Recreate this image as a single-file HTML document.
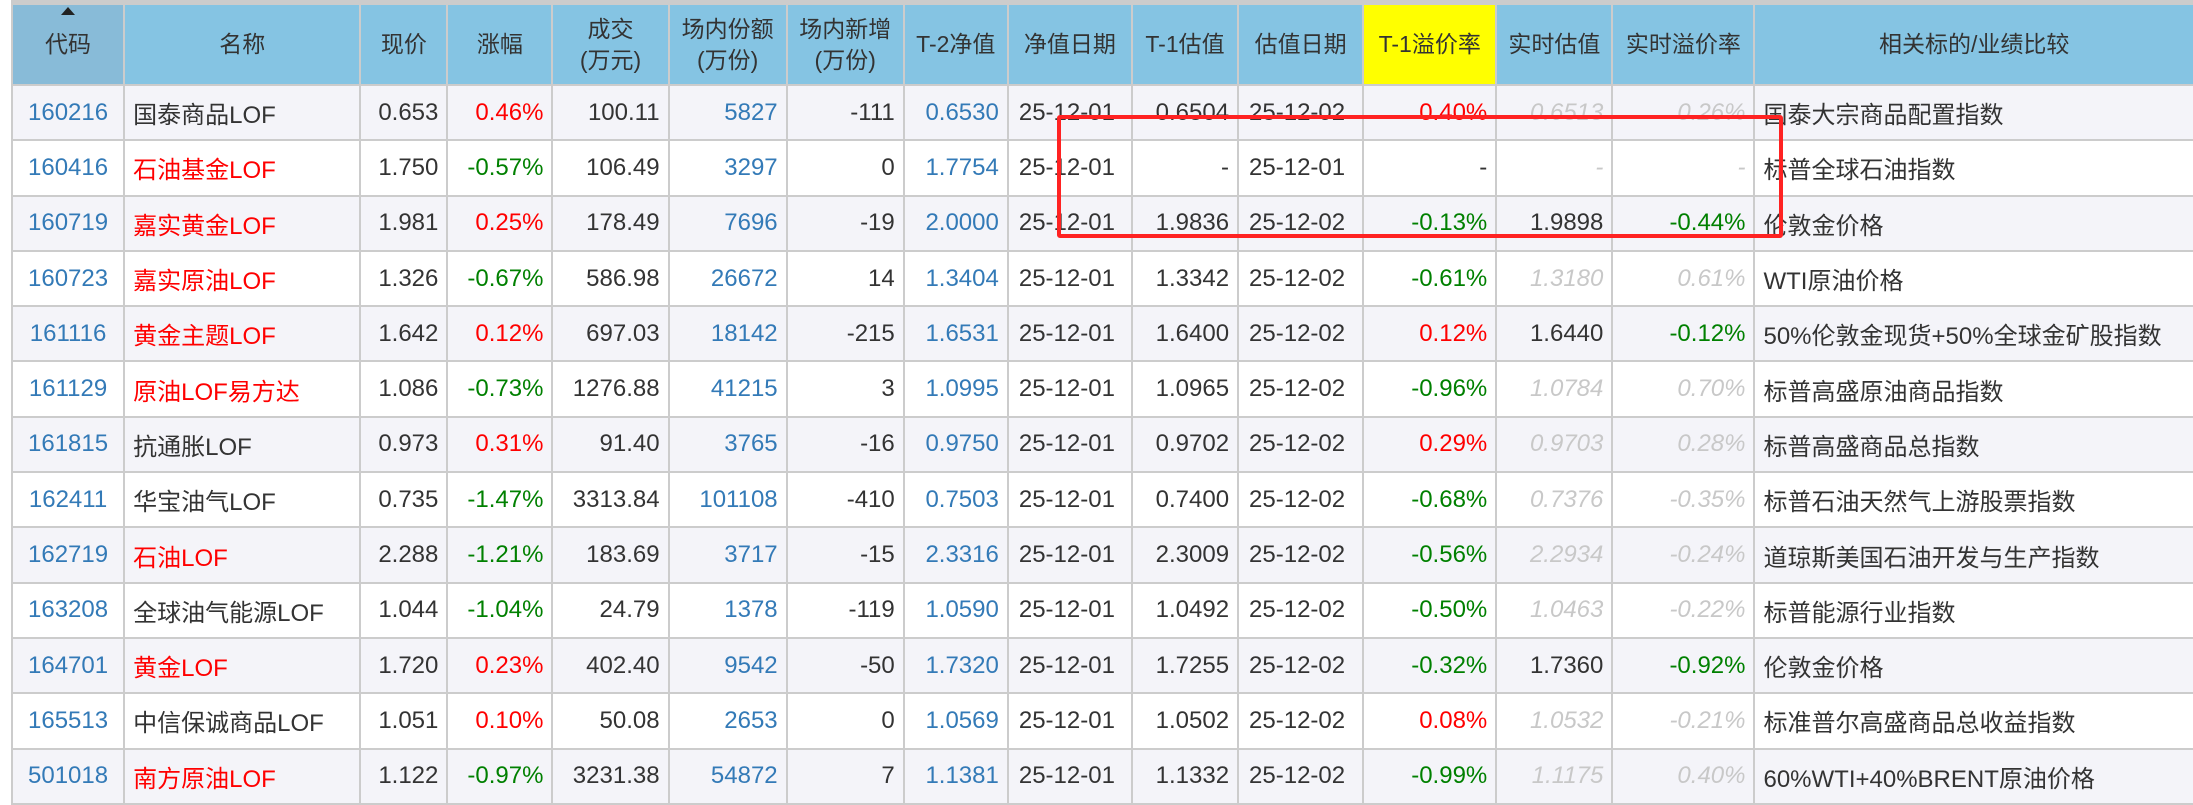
<!DOCTYPE html>
<html><head><meta charset="utf-8"><style>
html,body{margin:0;padding:0;background:#fff;width:2193px;height:805px;overflow:hidden}
body{font-family:"Liberation Sans","Noto Sans CJK SC",sans-serif;font-size:24px;color:#333}
.top{position:absolute;left:11px;top:0;width:2182px;height:4px;background:#ccc}
table{position:absolute;left:11px;top:3px;border-collapse:collapse;table-layout:fixed;width:2184px}
td,th{border:2px solid #ccc;padding:0 8px;white-space:nowrap;overflow:hidden}
th{background:#85c4e3;font-weight:normal;color:#333;height:79px;line-height:31px;text-align:center;position:relative;font-size:23px}
th.s{background:#88bbd8}
th.y{background:#ffff00}
tr.r td{height:53.3px}
tr.r:nth-child(even) td{background:#f4f4f9}
tr.r:nth-child(odd) td{background:#fff}
td{text-align:right}
td.c{text-align:center;color:#337ab7}
td.n{text-align:left}
td.d{text-align:left;padding-left:10px}
td.l{text-align:left}
.b{color:#337ab7}.rd{color:#f00}.g{color:#008000}.gr{color:#c8c8c8;font-style:italic}
.arr{position:absolute;left:50%;top:2px;margin-left:-7px;width:0;height:0;border-left:7px solid transparent;border-right:7px solid transparent;border-bottom:8px solid #222}
.box{position:absolute;left:1057px;top:115px;width:718px;height:115px;border:4px solid #f22;border-radius:3px}
</style></head><body>
<div class="top"></div>
<table>
<colgroup><col style="width:112px"><col style="width:236px"><col style="width:87px"><col style="width:105px"><col style="width:116px"><col style="width:118px"><col style="width:117px"><col style="width:104px"><col style="width:124px"><col style="width:106px"><col style="width:125px"><col style="width:133px"><col style="width:116px"><col style="width:142px"><col style="width:439px"></colgroup>
<tr><th class="s"><span class="arr"></span>代码</th><th>名称</th><th>现价</th><th>涨幅</th><th>成交<br>(万元)</th><th>场内份额<br>(万份)</th><th>场内新增<br>(万份)</th><th>T-2净值</th><th>净值日期</th><th>T-1估值</th><th>估值日期</th><th class="y">T-1溢价率</th><th>实时估值</th><th>实时溢价率</th><th>相关标的/业绩比较</th></tr>
<tr class="r"><td class="c">160216</td><td class="n">国泰商品LOF</td><td>0.653</td><td class="rd">0.46%</td><td>100.11</td><td class="b">5827</td><td>-111</td><td class="b">0.6530</td><td class="d">25-12-01</td><td>0.6504</td><td class="d">25-12-02</td><td class="rd">0.40%</td><td class="gr">0.6513</td><td class="gr">0.26%</td><td class="l">国泰大宗商品配置指数</td></tr>
<tr class="r"><td class="c">160416</td><td class="n rd">石油基金LOF</td><td>1.750</td><td class="g">-0.57%</td><td>106.49</td><td class="b">3297</td><td>0</td><td class="b">1.7754</td><td class="d">25-12-01</td><td>-</td><td class="d">25-12-01</td><td>-</td><td class="gr">-</td><td class="gr">-</td><td class="l">标普全球石油指数</td></tr>
<tr class="r"><td class="c">160719</td><td class="n rd">嘉实黄金LOF</td><td>1.981</td><td class="rd">0.25%</td><td>178.49</td><td class="b">7696</td><td>-19</td><td class="b">2.0000</td><td class="d">25-12-01</td><td>1.9836</td><td class="d">25-12-02</td><td class="g">-0.13%</td><td>1.9898</td><td class="g">-0.44%</td><td class="l">伦敦金价格</td></tr>
<tr class="r"><td class="c">160723</td><td class="n rd">嘉实原油LOF</td><td>1.326</td><td class="g">-0.67%</td><td>586.98</td><td class="b">26672</td><td>14</td><td class="b">1.3404</td><td class="d">25-12-01</td><td>1.3342</td><td class="d">25-12-02</td><td class="g">-0.61%</td><td class="gr">1.3180</td><td class="gr">0.61%</td><td class="l">WTI原油价格</td></tr>
<tr class="r"><td class="c">161116</td><td class="n rd">黄金主题LOF</td><td>1.642</td><td class="rd">0.12%</td><td>697.03</td><td class="b">18142</td><td>-215</td><td class="b">1.6531</td><td class="d">25-12-01</td><td>1.6400</td><td class="d">25-12-02</td><td class="rd">0.12%</td><td>1.6440</td><td class="g">-0.12%</td><td class="l">50%伦敦金现货+50%全球金矿股指数</td></tr>
<tr class="r"><td class="c">161129</td><td class="n rd">原油LOF易方达</td><td>1.086</td><td class="g">-0.73%</td><td>1276.88</td><td class="b">41215</td><td>3</td><td class="b">1.0995</td><td class="d">25-12-01</td><td>1.0965</td><td class="d">25-12-02</td><td class="g">-0.96%</td><td class="gr">1.0784</td><td class="gr">0.70%</td><td class="l">标普高盛原油商品指数</td></tr>
<tr class="r"><td class="c">161815</td><td class="n">抗通胀LOF</td><td>0.973</td><td class="rd">0.31%</td><td>91.40</td><td class="b">3765</td><td>-16</td><td class="b">0.9750</td><td class="d">25-12-01</td><td>0.9702</td><td class="d">25-12-02</td><td class="rd">0.29%</td><td class="gr">0.9703</td><td class="gr">0.28%</td><td class="l">标普高盛商品总指数</td></tr>
<tr class="r"><td class="c">162411</td><td class="n">华宝油气LOF</td><td>0.735</td><td class="g">-1.47%</td><td>3313.84</td><td class="b">101108</td><td>-410</td><td class="b">0.7503</td><td class="d">25-12-01</td><td>0.7400</td><td class="d">25-12-02</td><td class="g">-0.68%</td><td class="gr">0.7376</td><td class="gr">-0.35%</td><td class="l">标普石油天然气上游股票指数</td></tr>
<tr class="r"><td class="c">162719</td><td class="n rd">石油LOF</td><td>2.288</td><td class="g">-1.21%</td><td>183.69</td><td class="b">3717</td><td>-15</td><td class="b">2.3316</td><td class="d">25-12-01</td><td>2.3009</td><td class="d">25-12-02</td><td class="g">-0.56%</td><td class="gr">2.2934</td><td class="gr">-0.24%</td><td class="l">道琼斯美国石油开发与生产指数</td></tr>
<tr class="r"><td class="c">163208</td><td class="n">全球油气能源LOF</td><td>1.044</td><td class="g">-1.04%</td><td>24.79</td><td class="b">1378</td><td>-119</td><td class="b">1.0590</td><td class="d">25-12-01</td><td>1.0492</td><td class="d">25-12-02</td><td class="g">-0.50%</td><td class="gr">1.0463</td><td class="gr">-0.22%</td><td class="l">标普能源行业指数</td></tr>
<tr class="r"><td class="c">164701</td><td class="n rd">黄金LOF</td><td>1.720</td><td class="rd">0.23%</td><td>402.40</td><td class="b">9542</td><td>-50</td><td class="b">1.7320</td><td class="d">25-12-01</td><td>1.7255</td><td class="d">25-12-02</td><td class="g">-0.32%</td><td>1.7360</td><td class="g">-0.92%</td><td class="l">伦敦金价格</td></tr>
<tr class="r"><td class="c">165513</td><td class="n">中信保诚商品LOF</td><td>1.051</td><td class="rd">0.10%</td><td>50.08</td><td class="b">2653</td><td>0</td><td class="b">1.0569</td><td class="d">25-12-01</td><td>1.0502</td><td class="d">25-12-02</td><td class="rd">0.08%</td><td class="gr">1.0532</td><td class="gr">-0.21%</td><td class="l">标准普尔高盛商品总收益指数</td></tr>
<tr class="r"><td class="c">501018</td><td class="n rd">南方原油LOF</td><td>1.122</td><td class="g">-0.97%</td><td>3231.38</td><td class="b">54872</td><td>7</td><td class="b">1.1381</td><td class="d">25-12-01</td><td>1.1332</td><td class="d">25-12-02</td><td class="g">-0.99%</td><td class="gr">1.1175</td><td class="gr">0.40%</td><td class="l">60%WTI+40%BRENT原油价格</td></tr>
</table>
<div class="box"></div>
</body></html>
